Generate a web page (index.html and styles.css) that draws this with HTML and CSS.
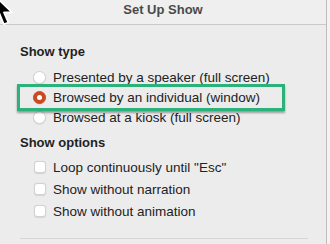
FILE: index.html
```html
<!DOCTYPE html>
<html lang="en">
<head>
    <meta charset="UTF-8">
    <meta name="viewport" content="width=device-width, initial-scale=1.0">
    <link rel="stylesheet" href="styles.css">
</head>
<body>
    <div class="window">
        <div class="titlebar">Set Up Show</div>

        <div class="content">
            <div class="group-title">Show type</div>
            <div class="choices">
                <label class="choice">
                    <span class="radio"></span>
                    Presented by a speaker (full screen)
                </label>
                <label class="choice highlight">
                    <span class="radio checked"></span>
                    Browsed by an individual (window)
                </label>
                <label class="choice">
                    <span class="radio"></span>
                    Browsed at a kiosk (full screen)
                </label>
            </div>

            <div class="group-title options-title">Show options</div>
            <div class="checks">
                <label class="check-row">
                    <span class="checkbox"></span>
                    Loop continuously until "Esc"
                </label>
                <label class="check-row">
                    <span class="checkbox"></span>
                    Show without narration
                </label>
                <label class="check-row">
                    <span class="checkbox"></span>
                    Show without animation
                </label>
            </div>

            <div class="divider"></div>
        </div>

        <!-- mouse pointer over the corner -->
        <svg class="cursor" width="25" height="35" viewBox="0 0 20 28">
            <path d="M1 1 L1 21 L6 16.5 L9.5 25 L13 23.5 L9.5 15.5 L16 15.5 Z"
                  fill="#000" stroke="#fff" stroke-width="1.3" stroke-linejoin="round"/>
        </svg>
    </div>
</body>
</html>
```

FILE: styles.css
```css
/* Base */
:root {
    --panel-bg: #ececec;
    --title-text: #4a4a4a;
    --label-text: #222222;
    --line: #c9c9c9;
    --accent: #c94b23;
    --highlight: #2bb27b;
}

body {
    margin: 0;
    background-color: #f3f3f3;
    font-family: 'Liberation Sans', Arial, sans-serif;
    font-size: 13.5px;
    color: var(--label-text);
}

.window {
    position: relative;
    width: 326px;
    height: 244px;
    overflow: hidden;
    background-color: var(--panel-bg);
    border-right: 1px solid #bdbdbd;
}

/* Title bar */
.titlebar {
    height: 20px;
    padding-bottom: 4px;
    line-height: 20px;
    text-align: center;
    font-size: 13px;
    font-weight: bold;
    color: var(--title-text);
    background-color: #efefef;
    border-bottom: 1px solid var(--line);
}

.content {
    padding: 19px 0 0 20px;
}

.group-title {
    height: 16px;
    line-height: 16px;
    font-size: 13px;
    font-weight: bold;
}

.options-title {
    margin-top: 8px;
}

/* Radio list */
.choices {
    margin-top: 7px;
}

.choice {
    display: flex;
    align-items: center;
    height: 20px;
    padding-left: 13px;
    gap: 7px;
}

.radio {
    width: 13px;
    height: 13px;
    box-sizing: border-box;
    border-radius: 50%;
    background-color: #ffffff;
    border: 1px solid #d2d2d2;
    box-shadow: 0 0.5px 1px rgba(0, 0, 0, 0.12);
}

.radio.checked {
    background-color: var(--accent);
    border-color: var(--accent);
    display: flex;
    align-items: center;
    justify-content: center;
}

.radio.checked::after {
    content: '';
    width: 5px;
    height: 5px;
    border-radius: 50%;
    background-color: #ffffff;
}

/* Green callout around the chosen row */
.highlight {
    position: relative;
    z-index: 1;
}

.highlight::before {
    content: '';
    position: absolute;
    left: -3px;
    top: -3px;
    width: 268px;
    height: 27px;
    box-sizing: border-box;
    border: 3px solid var(--highlight);
    background-color: var(--panel-bg);
    box-shadow: 0 2px 2px rgba(0, 0, 0, 0.35);
    z-index: -1;
}

/* Checkbox list */
.checks {
    margin-top: 5px;
}

.check-row {
    display: flex;
    align-items: center;
    height: 22px;
    padding-left: 14px;
    gap: 7px;
}

.checkbox {
    width: 12px;
    height: 12px;
    box-sizing: border-box;
    border-radius: 3px;
    background-color: #ffffff;
    border: 1px solid #d2d2d2;
    box-shadow: 0 0.5px 1px rgba(0, 0, 0, 0.1);
}

.divider {
    margin-top: 16px;
    width: 288px;
    border-top: 1px solid #d6d6d6;
}

.cursor {
    position: absolute;
    left: -8px;
    top: -7px;
}
```
